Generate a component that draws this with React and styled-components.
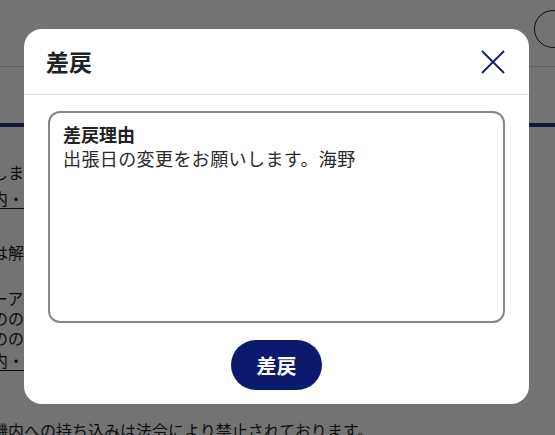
import React from "react";
import styled, { createGlobalStyle } from "styled-components";

const Global = createGlobalStyle`
  html, body { margin: 0; padding: 0; background: #fff; }
  body {
    font-family: "Noto Sans CJK JP", "Noto Sans", sans-serif;
    color: #222;
    overflow: hidden;
  }
  * { box-sizing: border-box; }
`;

const Page = styled.div`
  position: relative;
  width: 555px;
  height: 435px;
  overflow: hidden;
  background: #fff;
`;

const PageHeader = styled.header`
  height: 67px;
  display: flex;
  align-items: flex-start;
  justify-content: flex-end;
  border-bottom: 1px solid #d8d8d8;
  padding-top: 10px;
`;

const CircleButton = styled.div`
  width: 38px;
  height: 38px;
  border-radius: 50%;
  border: 1.5px solid #222;
  margin-right: -17px;
`;

const Content = styled.main`
  margin-top: 56px;
  border-top: 4px solid #2b3680;
  margin-left: -8px;
  width: 700px;
  font-size: 16px;
  line-height: 20px;
  color: #1d1d1d;
`;

const Line = styled.p`
  margin: 0;
  margin-top: ${(p) => p.$gap || 0}px;
  white-space: nowrap;
  text-decoration: ${(p) => (p.$link ? "underline" : "none")};
  text-underline-offset: 3px;
`;

const Overlay = styled.div`
  position: absolute;
  inset: 0;
  background: rgba(0, 0, 0, 0.55);
`;

const Modal = styled.div`
  position: absolute;
  left: 24px;
  top: 29px;
  width: 505px;
  height: 375px;
  background: #fff;
  border-radius: 18px;
  display: flex;
  flex-direction: column;
`;

const ModalHeader = styled.div`
  height: 66px;
  display: flex;
  align-items: center;
  justify-content: space-between;
  padding: 0 24px 0 22px;
  border-bottom: 1px solid #dedede;
`;

const Title = styled.h2`
  margin: 0;
  font-size: 23px;
  font-weight: 700;
  color: #222;
  line-height: 1;
`;

const CloseButton = styled.button`
  width: 24px;
  height: 24px;
  padding: 0;
  border: none;
  background: none;
  display: flex;
  cursor: pointer;
`;

const Body = styled.div`
  padding: 16px 24px 14px;
  display: flex;
  flex-direction: column;
  align-items: center;
  gap: 17px;
`;

const Field = styled.div`
  width: 457px;
  height: 212px;
  border: 2px solid #868686;
  border-radius: 12px;
  padding: 9px 13px;
  display: flex;
  flex-direction: column;
`;

const FieldLabel = styled.label`
  font-size: 18px;
  line-height: 24px;
  font-weight: 700;
  color: #222;
`;

const TextArea = styled.textarea`
  flex: 1;
  border: none;
  outline: none;
  resize: none;
  padding: 0;
  margin: 0;
  font-family: "Noto Sans CJK JP", "Noto Sans", sans-serif;
  font-size: 18px;
  letter-spacing: 0.4px;
  line-height: 24px;
  color: #2a2a2a;
  background: transparent;
`;

const SubmitButton = styled.button`
  width: 91px;
  height: 50px;
  border-radius: 25px;
  border: none;
  background: #0b1a6c;
  color: #fff;
  font-family: "Noto Sans CJK JP", "Noto Sans", sans-serif;
  font-size: 20px;
  font-weight: 700;
  cursor: pointer;
`;

export default function App() {
  return (
    <>
      <Global />
      <Page>
        <PageHeader>
          <CircleButton />
        </PageHeader>
        <Content>
          <Line $gap={35}>しまう恐れがありますので、ご注意ください。</Line>
          <Line $gap={6} $link>内・国際線の手荷物について</Line>
          <Line $gap={34}>は解除してからお預けください。</Line>
          <Line $gap={26}>ーアイテムについて</Line>
          <Line $gap={0}>ののお取り扱いについて</Line>
          <Line $gap={0}>ののお預けについて</Line>
          <Line $gap={2} $link>内・国際線の制限品について</Line>
          <Line $gap={50}>機内への持ち込みは法令により禁止されております。</Line>
        </Content>
        <Overlay />
        <Modal role="dialog">
          <ModalHeader>
            <Title>差戻</Title>
            <CloseButton aria-label="閉じる">
              <svg width="24" height="24" viewBox="0 0 24 24">
                <path
                  d="M1 1 L23 23 M23 1 L1 23"
                  stroke="#1b2366"
                  strokeWidth="2"
                  fill="none"
                />
              </svg>
            </CloseButton>
          </ModalHeader>
          <Body>
            <Field>
              <FieldLabel>差戻理由</FieldLabel>
              <TextArea defaultValue="出張日の変更をお願いします。海野" />
            </Field>
            <SubmitButton>差戻</SubmitButton>
          </Body>
        </Modal>
      </Page>
    </>
  );
}
